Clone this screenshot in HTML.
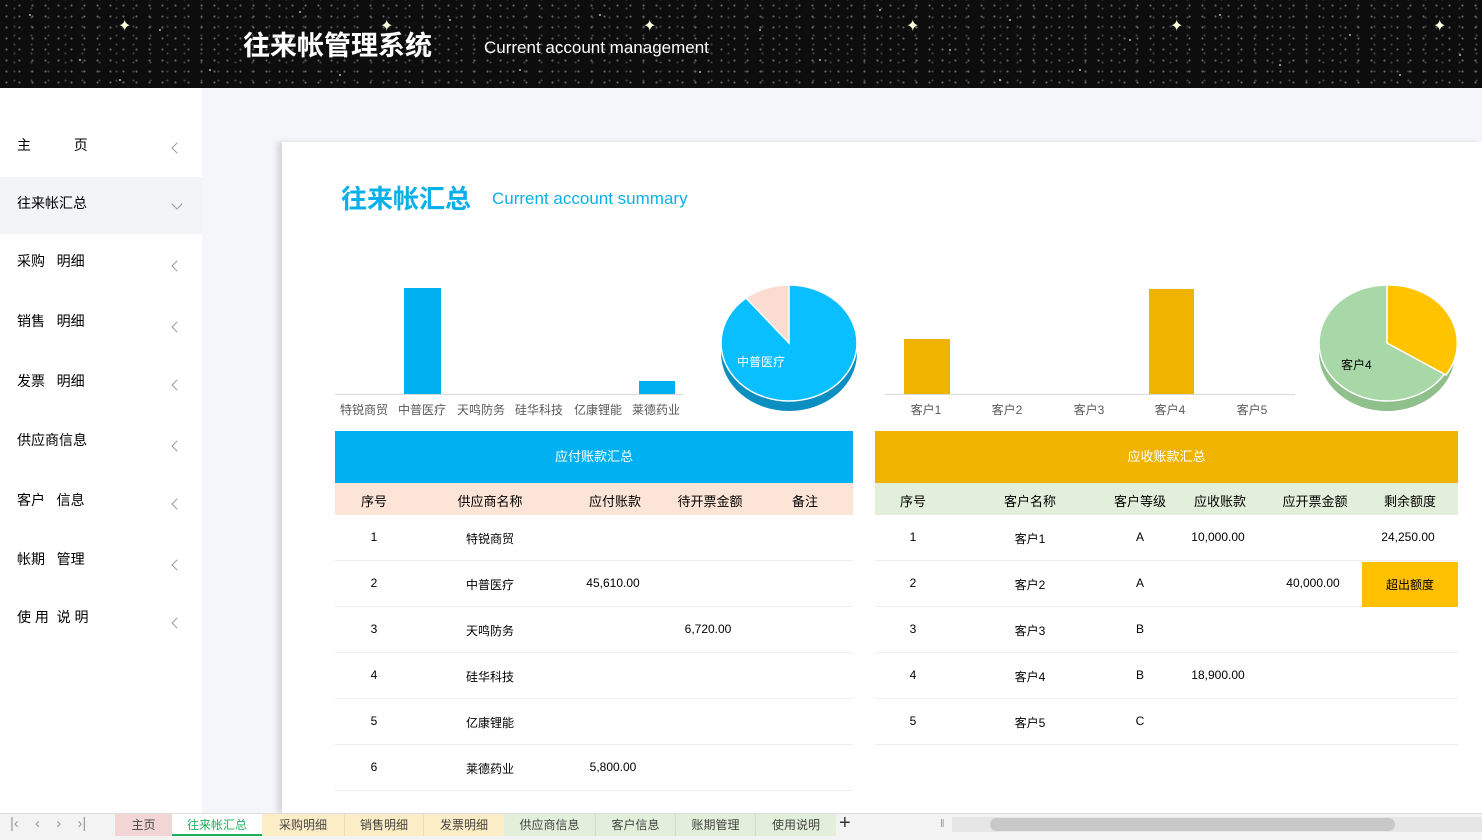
<!DOCTYPE html><html><head><meta charset="utf-8"><style>
*{margin:0;padding:0;box-sizing:border-box}
body{width:1482px;height:840px;overflow:hidden;background:#f5f6fa;font-family:"Liberation Sans","Noto Sans CJK SC",sans-serif;position:relative;color:#000}
.hd{position:absolute;left:0;top:0;width:1482px;height:88px;background-color:#0d0d0d;background-image:radial-gradient(circle,#666 0.8px,transparent 1.3px),radial-gradient(circle,#444 0.8px,transparent 1.3px);background-size:13px 11px,17px 9px;background-position:0 0,6px 4px}
.abs{position:absolute}
.side{position:absolute;left:0;top:88px;width:202px;height:725px;background:#fff}
.mi{position:absolute;left:17px;font-size:14px}
.ch{position:absolute;left:173px;width:8px;height:8px;border-left:1px solid #999;border-bottom:1px solid #999;transform:rotate(45deg)}
.panel{position:absolute;left:282px;top:142px;width:1200px;height:671px;background:#fff;box-shadow:-5px 0 5px #d8d8d8}
.c{position:absolute;font-size:12px;text-align:center;transform:translateX(-50%);white-space:nowrap}
.row{position:absolute;height:46px;border-bottom:1px solid #eee}
.tabs{position:absolute;left:0;top:813px;width:1482px;height:27px;background:#f3f3f3;border-top:1px solid #ddd;font-size:12px;color:#444}
.tab{position:absolute;top:0;height:22px;line-height:22px;text-align:center}
</style></head><body>
<div class="hd">
<svg width="1482" height="88" style="position:absolute;left:0;top:0">
<g fill="#fff" opacity=".7">
<circle cx="30" cy="15" r="1"/><circle cx="80" cy="60" r="1"/><circle cx="160" cy="30" r="1"/><circle cx="210" cy="70" r="1"/><circle cx="300" cy="12" r="1"/><circle cx="340" cy="75" r="1"/><circle cx="450" cy="20" r="1"/><circle cx="520" cy="70" r="1"/><circle cx="600" cy="15" r="1"/><circle cx="700" cy="72" r="1"/><circle cx="760" cy="30" r="1"/><circle cx="820" cy="60" r="1"/><circle cx="880" cy="10" r="1"/><circle cx="950" cy="50" r="1"/><circle cx="1010" cy="20" r="1"/><circle cx="1080" cy="70" r="1"/><circle cx="1130" cy="40" r="1"/><circle cx="1220" cy="15" r="1"/><circle cx="1280" cy="65" r="1"/><circle cx="1350" cy="35" r="1"/><circle cx="1400" cy="75" r="1"/><circle cx="1460" cy="55" r="1"/><circle cx="120" cy="80" r="1"/><circle cx="560" cy="45" r="1"/><circle cx="1000" cy="80" r="1"/></g>
<g fill="#ffd" font-size="16"><text x="118" y="31">✦</text><text x="380" y="31">✦</text><text x="643" y="31">✦</text><text x="906" y="31">✦</text><text x="1170" y="31">✦</text><text x="1433" y="31">✦</text></g>
</svg>
<div class="abs" style="left:243px;top:24px;font-size:27px;font-weight:bold;color:#fff">往来帐管理系统</div>
<div class="abs" style="left:484px;top:38px;font-size:17px;color:#fff">Current account management</div>
</div>
<div class="side">
<div class="abs" style="left:0;top:89px;width:202px;height:57px;background:#f3f4f8"></div>
<div class="mi" style="top:47px">主&nbsp;&nbsp;&nbsp;&nbsp;&nbsp;&nbsp;&nbsp;&nbsp;&nbsp;&nbsp;&nbsp;页</div><div class="ch" style="top:56px"></div>
<div class="mi" style="top:105px">往来帐汇总</div><div class="ch" style="top:112px;transform:rotate(-45deg)"></div>
<div class="mi" style="top:163px">采购&nbsp;&nbsp;&nbsp;明细</div><div class="ch" style="top:174px"></div>
<div class="mi" style="top:223px">销售&nbsp;&nbsp;&nbsp;明细</div><div class="ch" style="top:235px"></div>
<div class="mi" style="top:283px">发票&nbsp;&nbsp;&nbsp;明细</div><div class="ch" style="top:293px"></div>
<div class="mi" style="top:342px">供应商信息</div><div class="ch" style="top:354px"></div>
<div class="mi" style="top:402px">客户&nbsp;&nbsp;&nbsp;信息</div><div class="ch" style="top:412px"></div>
<div class="mi" style="top:461px">帐期&nbsp;&nbsp;&nbsp;管理</div><div class="ch" style="top:473px"></div>
<div class="mi" style="top:519px">使 用&nbsp;&nbsp;说 明</div><div class="ch" style="top:531px"></div>
</div>
<div class="panel"></div>
<div class="abs" style="left:341px;top:179px;font-size:26px;font-weight:bold;color:#0ab0e8">往来帐汇总</div>
<div class="abs" style="left:492px;top:189px;font-size:17px;color:#0ab0e8">Current account summary</div>
<svg width="1482" height="420" style="position:absolute;left:0;top:0">
<line x1="335" y1="394.5" x2="683" y2="394.5" stroke="#d9d9d9"/>
<rect x="404" y="288" width="37" height="106" fill="#00b0f0"/>
<rect x="639" y="381" width="36" height="13" fill="#00b0f0"/>
<g font-size="12" fill="#595959" text-anchor="middle"><text x="364" y="414">特锐商贸</text><text x="422" y="414">中普医疗</text><text x="481" y="414">天鸣防务</text><text x="539" y="414">硅华科技</text><text x="598" y="414">亿康锂能</text><text x="656" y="414">莱德药业</text>
<text x="926" y="414">客户1</text><text x="1007" y="414">客户2</text><text x="1089" y="414">客户3</text><text x="1170" y="414">客户4</text><text x="1252" y="414">客户5</text></g>
<line x1="885" y1="394.5" x2="1295" y2="394.5" stroke="#d9d9d9"/>
<rect x="904" y="339" width="46" height="55" fill="#f0b400"/>
<rect x="1149" y="289" width="45" height="105" fill="#f0b400"/>
<ellipse cx="789" cy="353" rx="68" ry="58" fill="#0a8fc0"/>
<ellipse cx="789" cy="343" rx="68" ry="58" fill="#0abfff" stroke="#fff" stroke-width="1.5"/>
<path d="M789 343 L789 285 A68 58 0 0 0 746 298 Z" fill="#fcdcd0" stroke="#fff" stroke-width="1.5"/>
<text x="737" y="366" font-size="12" fill="#fff">中普医疗</text>
<ellipse cx="1387" cy="353" rx="68" ry="58" fill="#8fbf8a"/>
<ellipse cx="1387" cy="343" rx="68" ry="58" fill="#a9d8a8" stroke="#fff" stroke-width="1.5"/>
<path d="M1387 343 L1387 285 A68 58 0 0 1 1446 375 Z" fill="#ffc300" stroke="#fff" stroke-width="1.5"/>
<text x="1341" y="369" font-size="12" fill="#000">客户4</text>
</svg>
<div class="abs" style="left:335px;top:431px;width:518px;height:52px;background:#00b0f0;color:#fff;font-size:13px;text-align:center;line-height:52px">应付账款汇总</div>
<div class="abs" style="left:335px;top:483px;width:518px;height:32px;background:#fce4d6"></div>
<div class="c" style="left:374px;top:491px;font-size:13px">序号</div><div class="c" style="left:490px;top:491px;font-size:13px">供应商名称</div><div class="c" style="left:615px;top:491px;font-size:13px">应付账款</div><div class="c" style="left:710px;top:491px;font-size:13px">待开票金额</div><div class="c" style="left:805px;top:491px;font-size:13px">备注</div>
<div class="row" style="left:335px;top:515px;width:518px"></div><div class="row" style="left:335px;top:561px;width:518px"></div><div class="row" style="left:335px;top:607px;width:518px"></div><div class="row" style="left:335px;top:653px;width:518px"></div><div class="row" style="left:335px;top:699px;width:518px"></div><div class="row" style="left:335px;top:745px;width:518px"></div>
<div class="c" style="left:374px;top:530px">1</div><div class="abs" style="left:466px;top:530px;font-size:12px">特锐商贸</div>
<div class="c" style="left:374px;top:576px">2</div><div class="abs" style="left:466px;top:576px;font-size:12px">中普医疗</div><div class="c" style="left:613px;top:576px">45,610.00</div>
<div class="c" style="left:374px;top:622px">3</div><div class="abs" style="left:466px;top:622px;font-size:12px">天鸣防务</div><div class="c" style="left:708px;top:622px">6,720.00</div>
<div class="c" style="left:374px;top:668px">4</div><div class="abs" style="left:466px;top:668px;font-size:12px">硅华科技</div>
<div class="c" style="left:374px;top:714px">5</div><div class="abs" style="left:466px;top:714px;font-size:12px">亿康锂能</div>
<div class="c" style="left:374px;top:760px">6</div><div class="abs" style="left:466px;top:760px;font-size:12px">莱德药业</div><div class="c" style="left:613px;top:760px">5,800.00</div>
<div class="abs" style="left:875px;top:431px;width:583px;height:52px;background:#f0b400;color:#fff;font-size:13px;text-align:center;line-height:52px">应收账款汇总</div>
<div class="abs" style="left:875px;top:483px;width:583px;height:32px;background:#e2efda"></div>
<div class="c" style="left:913px;top:491px;font-size:13px">序号</div><div class="c" style="left:1030px;top:491px;font-size:13px">客户名称</div><div class="c" style="left:1140px;top:491px;font-size:13px">客户等级</div><div class="c" style="left:1220px;top:491px;font-size:13px">应收账款</div><div class="c" style="left:1315px;top:491px;font-size:13px">应开票金额</div><div class="c" style="left:1410px;top:491px;font-size:13px">剩余额度</div>
<div class="row" style="left:875px;top:515px;width:583px"></div><div class="row" style="left:875px;top:561px;width:583px"></div><div class="row" style="left:875px;top:607px;width:583px"></div><div class="row" style="left:875px;top:653px;width:583px"></div><div class="row" style="left:875px;top:699px;width:583px"></div>
<div class="abs" style="left:1362px;top:562px;width:96px;height:45px;background:#ffc000"></div>
<div class="c" style="left:913px;top:530px">1</div><div class="c" style="left:1030px;top:530px">客户1</div><div class="c" style="left:1140px;top:530px">A</div><div class="c" style="left:1218px;top:530px">10,000.00</div><div class="c" style="left:1408px;top:530px">24,250.00</div>
<div class="c" style="left:913px;top:576px">2</div><div class="c" style="left:1030px;top:576px">客户2</div><div class="c" style="left:1140px;top:576px">A</div><div class="c" style="left:1313px;top:576px">40,000.00</div><div class="c" style="left:1410px;top:576px">超出额度</div>
<div class="c" style="left:913px;top:622px">3</div><div class="c" style="left:1030px;top:622px">客户3</div><div class="c" style="left:1140px;top:622px">B</div>
<div class="c" style="left:913px;top:668px">4</div><div class="c" style="left:1030px;top:668px">客户4</div><div class="c" style="left:1140px;top:668px">B</div><div class="c" style="left:1218px;top:668px">18,900.00</div>
<div class="c" style="left:913px;top:714px">5</div><div class="c" style="left:1030px;top:714px">客户5</div><div class="c" style="left:1140px;top:714px">C</div>
<div class="tabs">
<div class="abs" style="left:10px;top:1px;font-size:15px;color:#999;word-spacing:12px">|&lsaquo; &lsaquo; &rsaquo; &rsaquo;|</div>
<div class="tab" style="left:115px;width:57px;background:#f2d5d5">主页</div>
<div class="tab" style="left:172px;width:90px;background:#fff;color:#1aaf5d;border-bottom:2px solid #1aaf5d">往来帐汇总</div>
<div class="tab" style="left:262px;width:83px;background:#fdedc6;border-right:1px solid #eedcae">采购明细</div>
<div class="tab" style="left:345px;width:79px;background:#fdedc6;border-right:1px solid #eedcae">销售明细</div>
<div class="tab" style="left:424px;width:80px;background:#fdedc6">发票明细</div>
<div class="tab" style="left:504px;width:92px;background:#e2efda;border-right:1px solid #cfdfc6">供应商信息</div>
<div class="tab" style="left:596px;width:80px;background:#e2efda;border-right:1px solid #cfdfc6">客户信息</div>
<div class="tab" style="left:676px;width:80px;background:#e2efda;border-right:1px solid #cfdfc6">账期管理</div>
<div class="tab" style="left:756px;width:80px;background:#e2efda">使用说明</div>
<div class="abs" style="left:839px;top:-2px;font-size:20px;color:#333">+</div>
<div class="abs" style="left:940px;top:4px;color:#999;font-size:11px">‖</div>
<div class="abs" style="left:952px;top:3px;width:530px;height:15px;background:#e6e6e6"></div>
<div class="abs" style="left:990px;top:4px;width:405px;height:13px;background:#c8c8c8;border-radius:7px"></div>
</div>
</body></html>
